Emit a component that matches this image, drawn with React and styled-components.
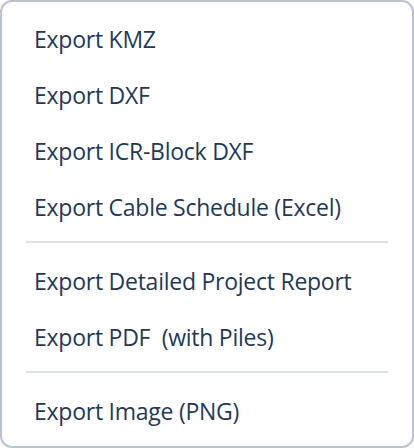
import React from "react";
import styled, { createGlobalStyle } from "styled-components";

const GlobalStyle = createGlobalStyle`
  html, body {
    margin: 0;
    padding: 0;
    background: #ffffff;
  }
  * {
    box-sizing: border-box;
  }
`;

const Menu = styled.div`
  width: 414px;
  height: 448px;
  border: 2px solid #b9c3d1;
  border-radius: 12px;
  background: #ffffff;
  padding: 9px 0 8px;
  display: flex;
  flex-direction: column;
  font-family: "Open Sans", "Noto Sans", sans-serif;
`;

const Item = styled.div`
  height: 56px;
  flex-shrink: 0;
  display: flex;
  align-items: center;
  padding: 0 32px;
  font-size: 23px;
  letter-spacing: -0.25px;
  color: #1d3a5c;
  cursor: pointer;
  white-space: pre;

  &:hover {
    background: #f3f6fa;
  }
`;

const Divider = styled.div`
  height: 2px;
  flex-shrink: 0;
  margin: 6px 24px 10px;
  background: #dde2ea;
`;

const groups = [
  ["Export KMZ", "Export DXF", "Export ICR-Block DXF", "Export Cable Schedule (Excel)"],
  ["Export Detailed Project Report", "Export PDF  (with Piles)"],
  ["Export Image (PNG)"],
];

const App = () => (
  <>
    <GlobalStyle />
    <Menu>
      {groups.map((group, i) => (
        <React.Fragment key={i}>
          {i > 0 && <Divider />}
          {group.map((label) => (
            <Item key={label}>{label}</Item>
          ))}
        </React.Fragment>
      ))}
    </Menu>
  </>
);

export default App;
